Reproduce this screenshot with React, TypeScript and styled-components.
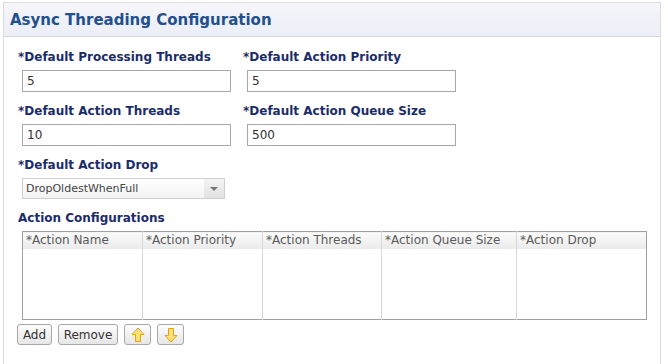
import React from "react";
import styled, { createGlobalStyle } from "styled-components";

const GlobalStyle = createGlobalStyle`
  html, body {
    margin: 0;
    padding: 0;
    background: #fff;
    overflow: hidden;
  }
  body {
    font-family: "DejaVu Sans", Tahoma, sans-serif;
  }
`;

const Panel = styled.div`
  margin: 2px 0 0 3px;
  width: 656px;
  min-height: 361px;
  border: 1px solid #dcdcdc;
  border-bottom: none;
  box-sizing: content-box;
`;

const Header = styled.div`
  height: 33px;
  display: flex;
  align-items: center;
  padding-left: 6px;
  background: linear-gradient(to bottom, #f6f6fb, #eceef6);
  border-bottom: 1px solid #d6d6dc;
`;

const Title = styled.h1`
  margin: 0;
  font-size: 15px;
  font-weight: bold;
  color: #22508c;
`;

const Body = styled.div`
  padding: 11px 0 0 14px;
`;

const FieldGrid = styled.div`
  display: grid;
  grid-template-columns: 225px 225px;
`;

const Field = styled.div`
  display: flex;
  flex-direction: column;
  margin-bottom: 10px;
`;

const Label = styled.label`
  display: block;
  height: 18px;
  line-height: 18px;
  font-size: 12px;
  font-weight: bold;
  color: #1b2c6a;
  margin-bottom: 4px;
  white-space: nowrap;
`;

const Input = styled.input`
  box-sizing: border-box;
  margin-left: 4px;
  width: 209px;
  height: 22px;
  border: 1px solid #a7a7a7;
  padding: 0 4px;
  font-family: inherit;
  font-size: 12px;
  color: #333;
  outline: none;
`;

const Select = styled.div`
  box-sizing: border-box;
  margin-left: 4px;
  width: 203px;
  height: 21px;
  display: flex;
  border: 1px solid #cfcfcf;
  background: linear-gradient(to bottom, #ffffff, #f2f2f2);
  font-size: 11px;
  color: #444;
`;

const SelectText = styled.span`
  flex: 1;
  line-height: 19px;
  padding-left: 3px;
`;

const SelectArrow = styled.span`
  width: 20px;
  display: flex;
  align-items: center;
  justify-content: center;
  background: linear-gradient(to bottom, #f4f4f4, #e2e2e2);
  &::after {
    content: "";
    border-left: 4px solid transparent;
    border-right: 4px solid transparent;
    border-top: 4px solid #777;
  }
`;

const Table = styled.table`
  margin-left: 4px;
  width: 625px;
  height: 89px;
  border-collapse: collapse;
  border: 1px solid #a0a0a0;
  table-layout: fixed;
`;

const Th = styled.th`
  box-sizing: border-box;
  height: 17px;
  padding: 0 0 0 3px;
  text-align: left;
  font-weight: normal;
  font-size: 12px;
  color: #5a5a5a;
  background: linear-gradient(to bottom, #fbfbfb, #eaeaea);
  border-left: 1px solid #d8d8d8;
  white-space: nowrap;
  overflow: hidden;
  &:first-child {
    border-left: none;
  }
`;

const Td = styled.td`
  border-left: 1px solid #d8d8d8;
  &:first-child {
    border-left: none;
  }
`;

const Toolbar = styled.div`
  display: flex;
  gap: 6px;
  margin-top: 4px;
  margin-left: -1px;
`;

const Button = styled.button<{ $w: number }>`
  box-sizing: border-box;
  width: ${(p) => p.$w}px;
  height: 21px;
  padding: 0;
  display: flex;
  align-items: center;
  justify-content: center;
  border: 1px solid #a8a8a8;
  border-radius: 3px;
  background: linear-gradient(to bottom, #fdfdfd, #e6e6e6);
  font-family: inherit;
  font-size: 12px;
  color: #333;
`;

function Arrow({ down }: { down?: boolean }) {
  return (
    <svg width="14" height="16" viewBox="0 0 14 16">
      <path
        d="M7 1 L13 7.5 L9.5 7.5 L9.5 14.5 L4.5 14.5 L4.5 7.5 L1 7.5 Z"
        fill="#fde07a"
        stroke="#e0a31a"
        strokeWidth="1"
        strokeLinejoin="round"
        transform={down ? "rotate(180 7 8)" : undefined}
      />
    </svg>
  );
}

const columns = [
  { name: "*Action Name", w: 120 },
  { name: "*Action Priority", w: 120 },
  { name: "*Action Threads", w: 119 },
  { name: "*Action Queue Size", w: 135 },
  { name: "*Action Drop", w: 130 },
];

export default function App() {
  return (
    <>
      <GlobalStyle />
      <Panel>
        <Header>
          <Title>Async Threading Configuration</Title>
        </Header>
        <Body>
          <FieldGrid>
            <Field>
              <Label>*Default Processing Threads</Label>
              <Input defaultValue="5" />
            </Field>
            <Field>
              <Label>*Default Action Priority</Label>
              <Input defaultValue="5" />
            </Field>
            <Field>
              <Label>*Default Action Threads</Label>
              <Input defaultValue="10" />
            </Field>
            <Field>
              <Label>*Default Action Queue Size</Label>
              <Input defaultValue="500" />
            </Field>
          </FieldGrid>
          <Field>
            <Label>*Default Action Drop</Label>
            <Select>
              <SelectText>DropOldestWhenFull</SelectText>
              <SelectArrow />
            </Select>
          </Field>
          <Label>Action Configurations</Label>
          <Table>
            <colgroup>
              {columns.map((c) => (
                <col key={c.name} style={{ width: c.w }} />
              ))}
            </colgroup>
            <thead>
              <tr>
                {columns.map((c) => (
                  <Th key={c.name}>{c.name}</Th>
                ))}
              </tr>
            </thead>
            <tbody>
              <tr>
                {columns.map((c) => (
                  <Td key={c.name} />
                ))}
              </tr>
            </tbody>
          </Table>
          <Toolbar>
            <Button $w={35}>Add</Button>
            <Button $w={60}>Remove</Button>
            <Button $w={27}>
              <Arrow />
            </Button>
            <Button $w={27}>
              <Arrow down />
            </Button>
          </Toolbar>
        </Body>
      </Panel>
    </>
  );
}
